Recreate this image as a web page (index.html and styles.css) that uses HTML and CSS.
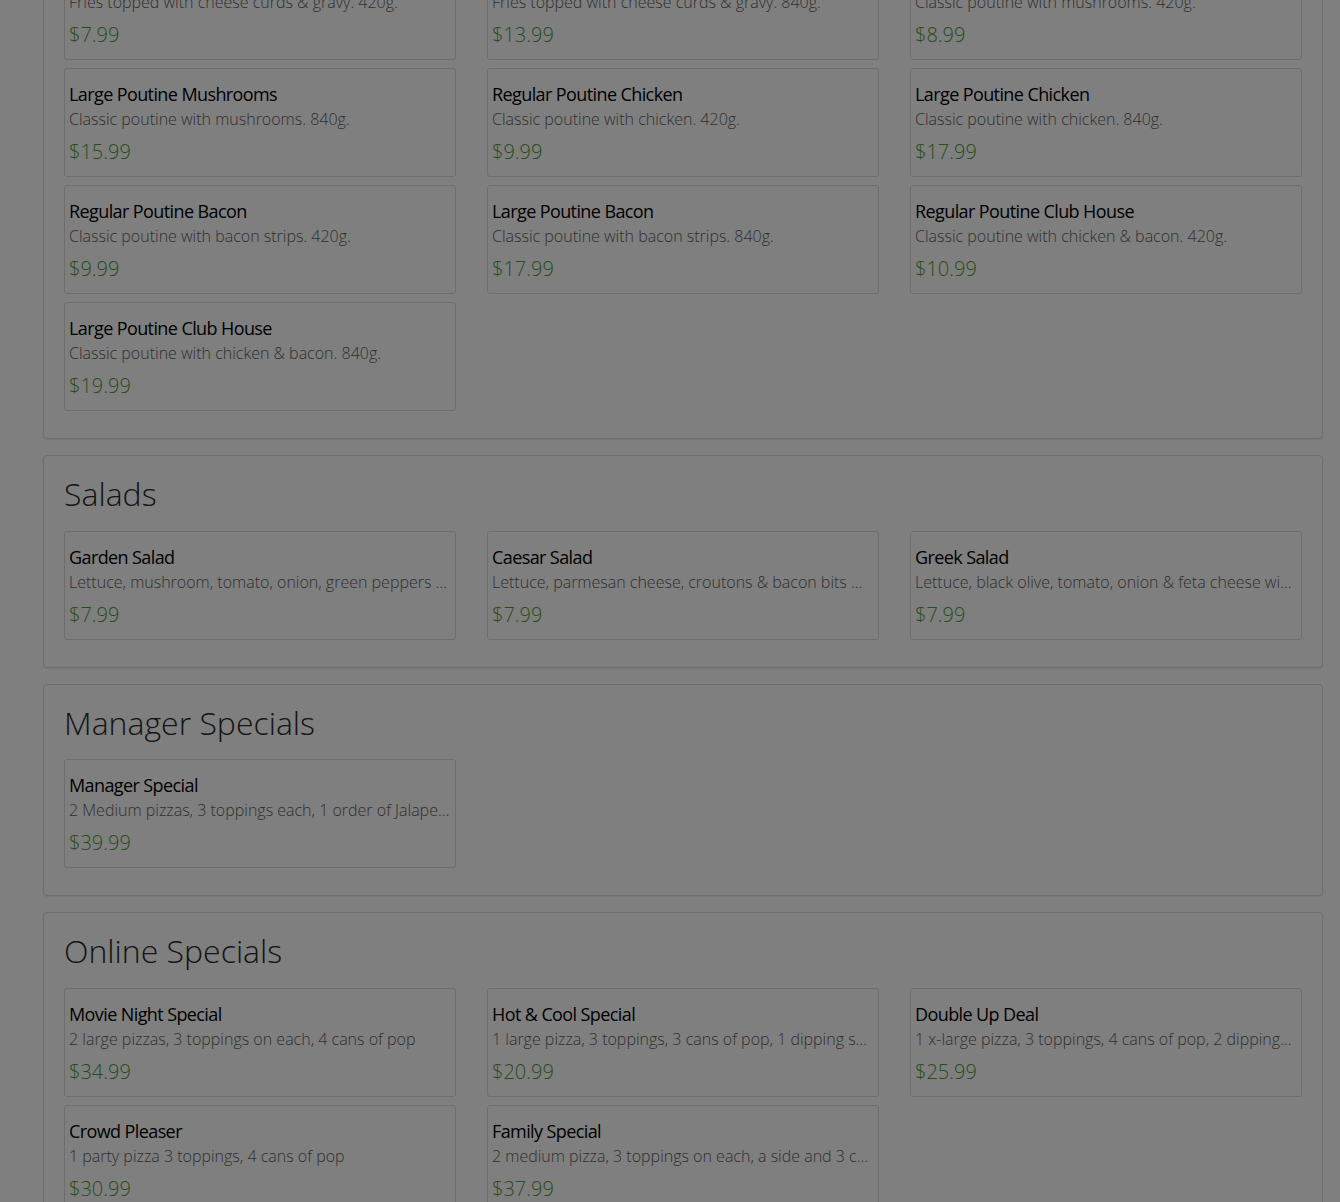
FILE: index.html
```html
<!DOCTYPE html>
<html lang="en">
<head>
  <meta charset="UTF-8">
  <meta name="viewport" content="width=device-width, initial-scale=1.0">
  <title>Menu</title>
  <link rel="stylesheet" href="styles.css">
</head>
<body>
  <div class="menu-page">

    <div class="menu-panel first-panel">
      <div class="item-grid">
        <div class="item-card">
          <h4 class="item-name">Regular Poutine</h4>
          <p class="item-desc">Fries topped with cheese curds &amp; gravy. 420g.</p>
          <div class="item-price">$7.99</div>
        </div>
        <div class="item-card">
          <h4 class="item-name">Large Poutine</h4>
          <p class="item-desc">Fries topped with cheese curds &amp; gravy. 840g.</p>
          <div class="item-price">$13.99</div>
        </div>
        <div class="item-card">
          <h4 class="item-name">Regular Poutine Mushrooms</h4>
          <p class="item-desc">Classic poutine with mushrooms. 420g.</p>
          <div class="item-price">$8.99</div>
        </div>
        <div class="item-card">
          <h4 class="item-name">Large Poutine Mushrooms</h4>
          <p class="item-desc">Classic poutine with mushrooms. 840g.</p>
          <div class="item-price">$15.99</div>
        </div>
        <div class="item-card">
          <h4 class="item-name">Regular Poutine Chicken</h4>
          <p class="item-desc">Classic poutine with chicken. 420g.</p>
          <div class="item-price">$9.99</div>
        </div>
        <div class="item-card">
          <h4 class="item-name">Large Poutine Chicken</h4>
          <p class="item-desc">Classic poutine with chicken. 840g.</p>
          <div class="item-price">$17.99</div>
        </div>
        <div class="item-card">
          <h4 class="item-name">Regular Poutine Bacon</h4>
          <p class="item-desc">Classic poutine with bacon strips. 420g.</p>
          <div class="item-price">$9.99</div>
        </div>
        <div class="item-card">
          <h4 class="item-name">Large Poutine Bacon</h4>
          <p class="item-desc">Classic poutine with bacon strips. 840g.</p>
          <div class="item-price">$17.99</div>
        </div>
        <div class="item-card">
          <h4 class="item-name">Regular Poutine Club House</h4>
          <p class="item-desc">Classic poutine with chicken &amp; bacon. 420g.</p>
          <div class="item-price">$10.99</div>
        </div>
        <div class="item-card">
          <h4 class="item-name">Large Poutine Club House</h4>
          <p class="item-desc">Classic poutine with chicken &amp; bacon. 840g.</p>
          <div class="item-price">$19.99</div>
        </div>
      </div>
    </div>

    <div class="menu-panel">
      <h2 class="panel-title">Salads</h2>
      <div class="item-grid">
        <div class="item-card">
          <h4 class="item-name">Garden Salad</h4>
          <p class="item-desc">Lettuce, mushroom, tomato, onion, green peppers &amp; cucumber with your choice of dressing</p>
          <div class="item-price">$7.99</div>
        </div>
        <div class="item-card">
          <h4 class="item-name">Caesar Salad</h4>
          <p class="item-desc">Lettuce, parmesan cheese, croutons &amp; bacon bits with caesar dressing</p>
          <div class="item-price">$7.99</div>
        </div>
        <div class="item-card">
          <h4 class="item-name">Greek Salad</h4>
          <p class="item-desc">Lettuce, black olive, tomato, onion &amp; feta cheese with greek dressing</p>
          <div class="item-price">$7.99</div>
        </div>
      </div>
    </div>

    <div class="menu-panel">
      <h2 class="panel-title">Manager Specials</h2>
      <div class="item-grid">
        <div class="item-card">
          <h4 class="item-name">Manager Special</h4>
          <p class="item-desc">2 Medium pizzas, 3 toppings each, 1 order of Jalapeno poppers and 4 cans of pop</p>
          <div class="item-price">$39.99</div>
        </div>
      </div>
    </div>

    <div class="menu-panel">
      <h2 class="panel-title">Online Specials</h2>
      <div class="item-grid">
        <div class="item-card">
          <h4 class="item-name">Movie Night Special</h4>
          <p class="item-desc">2 large pizzas, 3 toppings on each, 4 cans of pop</p>
          <div class="item-price">$34.99</div>
        </div>
        <div class="item-card">
          <h4 class="item-name">Hot &amp; Cool Special</h4>
          <p class="item-desc">1 large pizza, 3 toppings, 3 cans of pop, 1 dipping sauce</p>
          <div class="item-price">$20.99</div>
        </div>
        <div class="item-card">
          <h4 class="item-name">Double Up Deal</h4>
          <p class="item-desc">1 x-large pizza, 3 toppings, 4 cans of pop, 2 dippings sauces</p>
          <div class="item-price">$25.99</div>
        </div>
        <div class="item-card">
          <h4 class="item-name">Crowd Pleaser</h4>
          <p class="item-desc">1 party pizza 3 toppings, 4 cans of pop</p>
          <div class="item-price">$30.99</div>
        </div>
        <div class="item-card">
          <h4 class="item-name">Family Special</h4>
          <p class="item-desc">2 medium pizza, 3 toppings on each, a side and 3 cans of pop</p>
          <div class="item-price">$37.99</div>
        </div>
      </div>
    </div>

  </div>

  <div class="modal-backdrop"></div>
</body>
</html>
```

FILE: styles.css
```css
body {
  margin: 0;
  background-color: #fff;
  font-family: "Open Sans", "Liberation Sans", Arial, sans-serif;
  color: #333;
  overflow: hidden;
}

.menu-page {
  width: 1280px;
  margin: -70px 0 0 43px;
}

.menu-panel {
  border: 1px solid #ddd;
  border-radius: 4px;
  background: #fff;
  box-shadow: 0 1px 2px rgba(0, 0, 0, 0.08);
  padding: 20px 20px 27px 20px;
  margin-bottom: 16px;
}

.panel-title {
  font-size: 32px;
  font-weight: 300;
  line-height: 36px;
  margin: 0 0 18.5px 0;
  color: #2a2a2a;
}

.item-grid {
  display: grid;
  grid-template-columns: repeat(3, 1fr);
  column-gap: 31px;
  row-gap: 8px;
}

.item-card {
  border: 1px solid #ddd;
  border-radius: 3px;
  padding: 13px 5px 10px 4px;
  min-width: 0;
}

.item-name {
  font-size: 18px;
  font-weight: 400;
  line-height: 24px;
  margin: 0 0 1px 0;
  color: #000;
  letter-spacing: -0.6px;
}

.item-desc {
  font-size: 16px;
  font-weight: 300;
  line-height: 24px;
  margin: 0 0 7px 0;
  color: #5e5e5e;
  white-space: nowrap;
  overflow: hidden;
  text-overflow: ellipsis;
}

.item-price {
  font-size: 20px;
  font-weight: 300;
  line-height: 28px;
  color: #4e9a32;
}

.modal-backdrop {
  position: fixed;
  top: 0;
  left: 0;
  right: 0;
  bottom: 0;
  background: rgba(0, 0, 0, 0.5);
}
```
